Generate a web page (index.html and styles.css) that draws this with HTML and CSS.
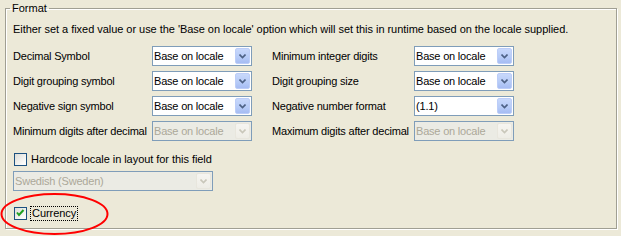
FILE: index.html
```html
<!DOCTYPE html>
<html>
<head>
	<title>Format</title>
<link rel="stylesheet" href="styles.css">
</head>
<body>
	<fieldset class="group">
		<legend>Format</legend>
		<p class="hint">Either set a fixed value or use the 'Base on locale' option which will set this in runtime based on the locale supplied.</p>
		<div class="grid">
			<span class="lbl">Decimal Symbol</span>
			<div class="combo"><span class="value">Base on locale</span><span class="btn"><svg width="7" height="5" viewBox="0 0 7 5"><path d="M0.5 0.5 L3.5 3.5 L6.5 0.5" /></svg></span></div>
			<span class="lbl">Minimum integer digits</span>
			<div class="combo"><span class="value">Base on locale</span><span class="btn"><svg width="7" height="5" viewBox="0 0 7 5"><path d="M0.5 0.5 L3.5 3.5 L6.5 0.5" /></svg></span></div>

			<span class="lbl">Digit grouping symbol</span>
			<div class="combo"><span class="value">Base on locale</span><span class="btn"><svg width="7" height="5" viewBox="0 0 7 5"><path d="M0.5 0.5 L3.5 3.5 L6.5 0.5" /></svg></span></div>
			<span class="lbl">Digit grouping size</span>
			<div class="combo"><span class="value">Base on locale</span><span class="btn"><svg width="7" height="5" viewBox="0 0 7 5"><path d="M0.5 0.5 L3.5 3.5 L6.5 0.5" /></svg></span></div>

			<span class="lbl">Negative sign symbol</span>
			<div class="combo"><span class="value">Base on locale</span><span class="btn"><svg width="7" height="5" viewBox="0 0 7 5"><path d="M0.5 0.5 L3.5 3.5 L6.5 0.5" /></svg></span></div>
			<span class="lbl">Negative number format</span>
			<div class="combo"><span class="value">(1.1)</span><span class="btn"><svg width="7" height="5" viewBox="0 0 7 5"><path d="M0.5 0.5 L3.5 3.5 L6.5 0.5" /></svg></span></div>

			<span class="lbl">Minimum digits after decimal</span>
			<div class="combo off"><span class="value">Base on locale</span><span class="btn"><svg width="7" height="5" viewBox="0 0 7 5"><path d="M0.5 0.5 L3.5 3.5 L6.5 0.5" /></svg></span></div>
			<span class="lbl">Maximum digits after decimal</span>
			<div class="combo off"><span class="value">Base on locale</span><span class="btn"><svg width="7" height="5" viewBox="0 0 7 5"><path d="M0.5 0.5 L3.5 3.5 L6.5 0.5" /></svg></span></div>
		</div>

		<label class="check hardcode"><span class="box"></span><span class="text">Hardcode locale in layout for this field</span></label>
		<div class="combo off wide"><span class="value">Swedish (Sweden)</span><span class="btn"><svg width="7" height="5" viewBox="0 0 7 5"><path d="M0.5 0.5 L3.5 3.5 L6.5 0.5" /></svg></span></div>

		<label class="check currency"><span class="box"><svg width="11" height="11" viewBox="0 0 11 11"><path d="M2 4.5 L4 7 L8.5 2" /></svg></span><span class="text focus">Currency</span></label>
	</fieldset>

	<svg class="ring" width="112" height="46" viewBox="0 0 112 46"><ellipse cx="54.5" cy="22" rx="53" ry="20" /></svg>
</body>
</html>
```

FILE: styles.css
```css
body{
	margin: 0;
	width: 621px;
	height: 236px;
	overflow: hidden;
	position: relative;
	background-color: #ece9d8;
	font-family: "Liberation Sans", Arial, sans-serif;
	font-size: 11px;
	line-height: 13px;
	letter-spacing: -0.2px;
	color: #000;
}
.group{
	margin: 2px 0 0 5px;
	width: 612px;
	box-sizing: border-box;
	padding: 0 0 8px 7px;
	min-inline-size: 0;
	border: 1px solid #a09f93;
	box-shadow: 1px 1px 0 #fff, inset 1px 1px 0 #fff;
}
legend{
	padding: 0 2px;
	margin-left: -3px;
	line-height: 13px;
	letter-spacing: 0;
}
.hint{
	margin: 8px 0 0 0;
	white-space: nowrap;
	letter-spacing: -0.04px;
}
.grid{
	display: grid;
	grid-template-columns: 139px 120px 142px 100px;
	grid-auto-rows: 20px;
	row-gap: 5px;
	margin-top: 10px;
}
.grid .combo{
	width: 100px;
}
.lbl{
	align-self: center;
	white-space: nowrap;
}
.combo{
	display: flex;
	align-items: stretch;
	height: 20px;
	box-sizing: border-box;
	border: 1px solid #7f9db9;
	background-color: #fff;
	padding: 1px;
}
.combo .value{
	flex: 1;
	white-space: nowrap;
	overflow: hidden;
	line-height: 16px;
}
.combo .btn{
	width: 15px;
	box-sizing: border-box;
	border: 1px solid #bccdf8;
	border-radius: 2px;
	background: linear-gradient(#c8d8fb, #b6cbf7 60%, #a6bcf3);
	display: flex;
	align-items: center;
	justify-content: center;
}
.combo .btn svg path{
	fill: none;
	stroke: #4d6185;
	stroke-width: 1.6;
}
.combo.off{
	background-color: #ebebe4;
	color: #aca899;
}
.combo.off .btn{
	border-color: #e8e6dd;
	background: linear-gradient(#f6f5f1, #eeede6);
}
.combo.off .btn svg path{
	stroke: #c9c7ba;
}
.combo.wide{
	width: 200px;
	margin-top: 5px;
}
.check{
	display: flex;
	align-items: center;
	height: 13px;
	gap: 4px;
	margin-left: 1px;
	letter-spacing: -0.05px;
}
.hardcode{
	margin-top: 12px;
}
.currency{
	margin-top: 16px;
}
.box{
	width: 13px;
	height: 13px;
	box-sizing: border-box;
	border: 1px solid #1c5180;
	background: linear-gradient(135deg, #dcdcd7, #fbfbf9 80%);
	display: flex;
	align-items: center;
	justify-content: center;
}
.box svg path{
	fill: none;
	stroke: #21a121;
	stroke-width: 2;
}
.focus{
	outline: 1px dotted #000;
	outline-offset: 0;
	padding: 0 1px;
}
.ring{
	position: absolute;
	left: 0;
	top: 192px;
}
.ring ellipse{
	fill: none;
	stroke: #f00;
	stroke-width: 2;
}
```
